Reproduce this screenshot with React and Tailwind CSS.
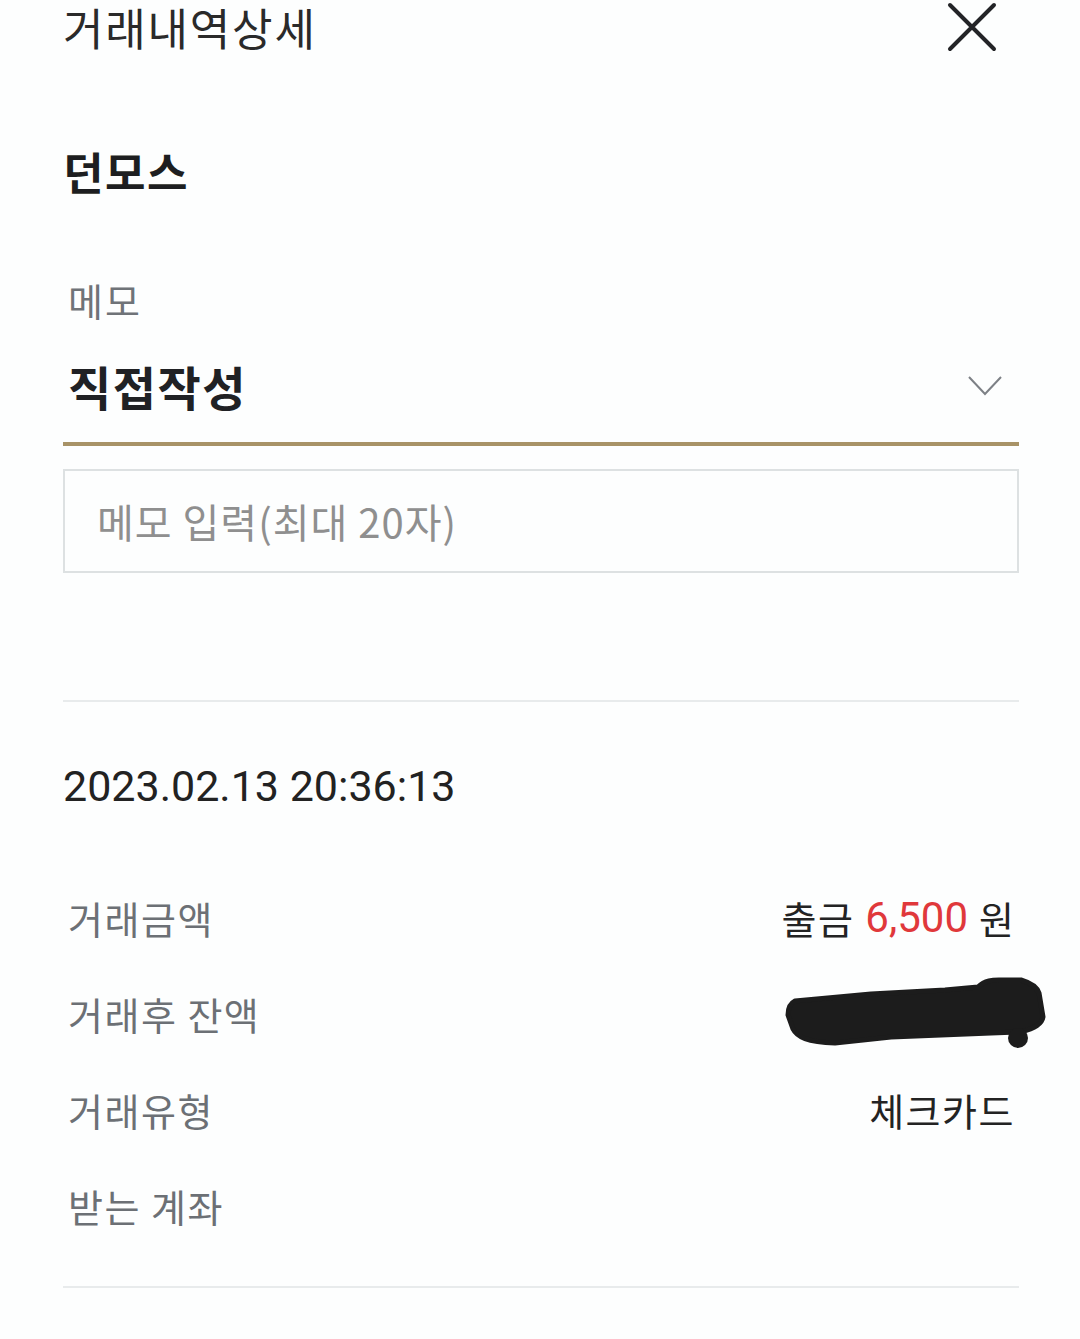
import React from "react";

const KR = { fontFamily: '"Noto Sans CJK KR", "Noto Sans", sans-serif' };

function CloseIcon() {
  return (
    <svg viewBox="0 0 50 50" className="w-[50px] h-[50px]" fill="none">
      <path d="M3 3L47 47M47 3L3 47" stroke="#232427" strokeWidth="4" strokeLinecap="round" />
    </svg>
  );
}

function Chevron() {
  return (
    <svg viewBox="0 0 34 20" className="w-[34px] h-[20px]" fill="none">
      <path d="M1 1L17 18L33 1" stroke="#7d8186" strokeWidth="2" />
    </svg>
  );
}

// hand drawn blot over the balance
function Scribble() {
  return (
    <svg viewBox="0 0 262 74" className="w-[262px] h-[74px] -mr-[28px]">
      <path
        d="M3 38 C3 30 6 26 10 24 L86 17 L160 13 L193 10 C200 3 208 3 214 3 L236 3 C246 6 252 10 254 16 L258 40 C257 47 250 51 236 55 L206 56 L106 60 L50 66 C22 65 12 60 8 52 Z"
        fill="#1c1c1c"
        stroke="#1c1c1c"
        strokeWidth="5"
        strokeLinejoin="round"
      />
      <circle cx="233" cy="61" r="10" fill="#1c1c1c" />
    </svg>
  );
}

function Row({ label, children }) {
  return (
    <div className="h-[96px] flex items-center justify-between">
      <span className="text-[38px] leading-[48px] tracking-[1.5px] text-[#6c7075] pl-[5px]" style={KR}>{label}</span>
      {children}
    </div>
  );
}

export default function App() {
  return (
    <div className="min-h-[1339px] bg-[#fdfefe] pl-[63px] pr-[61px] overflow-hidden" style={KR}>
      <div className="h-[54px] flex items-center justify-between">
        <h1 className="text-[44px] leading-[54px] tracking-[1.8px] text-[#2a2a2a]">거래내역상세</h1>
        <div className="mr-[22px]">
          <CloseIcon />
        </div>
      </div>

      <div className="mt-[90px] h-[54px] flex items-center">
        <h2 className="text-[44px] leading-[54px] tracking-[1.5px] font-bold text-[#1d1e20]">던모스</h2>
      </div>

      <div className="mt-[82px] h-[40px] flex items-center">
        <span className="text-[38px] leading-[40px] tracking-[2px] text-[#6f7378] pl-[5px]">메모</span>
      </div>

      <div className="mt-[40px] h-[86px] border-b-4 border-[#a89367]">
        <div className="h-[52px] flex items-center justify-between">
          <span className="text-[47px] leading-[52px] tracking-[1.5px] font-bold text-[#202124] pl-[5px]">직접작성</span>
          <div className="mr-[17px]">
            <Chevron />
          </div>
        </div>
      </div>

      <div className="mt-[23px] h-[104px] border-2 border-[#dde1e2] flex items-center pl-[32px]">
        <span className="text-[40px] leading-[50px] tracking-[1px] text-[#8f8f8f]">메모 입력(최대 20자)</span>
      </div>

      <div className="mt-[127px] h-[2px] bg-[#e8ebec]" />

      <div className="mt-[60px] h-[48px] flex items-center">
        <span className="text-[43px] leading-[48px] text-[#222]" style={{ fontFamily: "Roboto, sans-serif" }}>
          2023.02.13 20:36:13
        </span>
      </div>

      <div className="mt-[60px]">
        <Row label="거래금액">
          <span className="flex items-center gap-[11px] text-[38px] leading-[48px] text-[#232323] pr-[5px]">
            <span className="tracking-[1.5px]">출금</span>
            <span className="text-[42px] text-[#e0383b]" style={{ fontFamily: "Roboto, sans-serif" }}>6,500</span>
            <span>원</span>
          </span>
        </Row>
        <Row label="거래후 잔액">
          <Scribble />
        </Row>
        <Row label="거래유형">
          <span className="text-[38px] leading-[48px] tracking-[1.5px] text-[#232323] pr-[4px]">체크카드</span>
        </Row>
        <Row label="받는 계좌" />
      </div>

      <div className="mt-[32px] h-[2px] bg-[#e8ebec]" />
    </div>
  );
}
